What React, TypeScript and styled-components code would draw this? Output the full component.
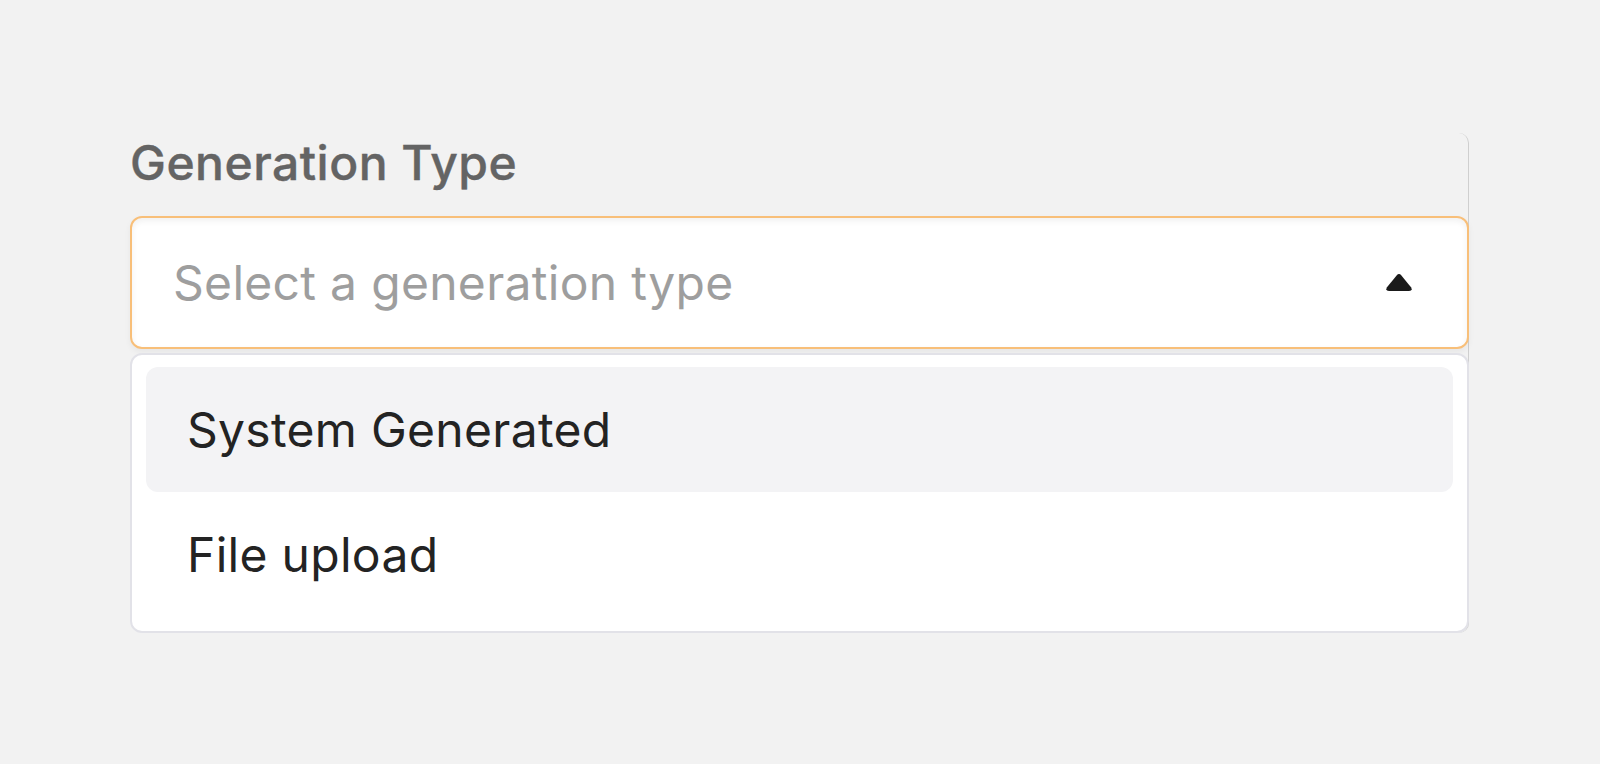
import styled, { createGlobalStyle } from "styled-components";

const GlobalStyle = createGlobalStyle`
  html, body {
    margin: 0;
    padding: 0;
    background: #f2f2f2;
  }
  body {
    font-family: Inter, "Noto Sans", sans-serif;
  }
`;

const Page = styled.div`
  min-height: 764px;
  padding: 133px 131px 0 130px;
  box-sizing: border-box;
`;

const Panel = styled.div`
  display: flex;
  flex-direction: column;
  border-right: 1px solid #cfcfcf;
  border-top-right-radius: 10px;
  border-bottom-right-radius: 10px;
`;

const Label = styled.label`
  font-size: 48px;
  font-weight: 500;
  color: #646464;
  line-height: 60px;
  margin-bottom: 23px;
  letter-spacing: 0.5px;
  -webkit-text-stroke: 0.4px #646464;
`;

const Trigger = styled.button`
  display: flex;
  align-items: center;
  justify-content: space-between;
  height: 133px;
  box-sizing: border-box;
  padding: 0 54px 0 41px;
  background: #ffffff;
  border: 2.5px solid #f8bf79;
  border-radius: 12px;
  box-shadow: inset 0 3px 6px rgba(0, 0, 0, 0.06), 0 3px 6px rgba(0, 0, 0, 0.05);
  font-family: inherit;
  cursor: pointer;
  margin-right: -1px;
`;

const Placeholder = styled.span`
  font-size: 48px;
  font-weight: 400;
  color: #9e9e9e;
  letter-spacing: 0.3px;
`;

const Menu = styled.ul`
  list-style: none;
  margin: 4px -1px 0 0;
  padding: 12px 14px 14px;
  background: #ffffff;
  border: 2px solid #e2e2e8;
  border-radius: 12px;
  display: flex;
  flex-direction: column;
`;

const Option = styled.li<{ $active?: boolean }>`
  height: 125px;
  display: flex;
  align-items: center;
  padding-left: 41px;
  border-radius: 12px;
  background: ${(p) => (p.$active ? "#f3f3f5" : "transparent")};
  font-size: 48px;
  font-weight: 400;
  color: #232323;
  letter-spacing: 0.3px;
`;

function CaretUp() {
  return (
    <svg width="28" height="20" viewBox="0 0 28 20">
      <path
        d="M11.6 2.4 Q14 -0.4 16.4 2.4 L26 14.2 Q28 18 24 18 L4 18 Q0 18 2 14.2 Z"
        fill="#1a1a1a"
      />
    </svg>
  );
}

export default function App() {
  const options = ["System Generated", "File upload"];
  return (
    <>
      <GlobalStyle />
      <Page>
        <Panel>
          <Label>Generation Type</Label>
          <Trigger>
            <Placeholder>Select a generation type</Placeholder>
            <CaretUp />
          </Trigger>
          <Menu>
            {options.map((o, i) => (
              <Option key={o} $active={i === 0}>
                {o}
              </Option>
            ))}
          </Menu>
        </Panel>
      </Page>
    </>
  );
}
